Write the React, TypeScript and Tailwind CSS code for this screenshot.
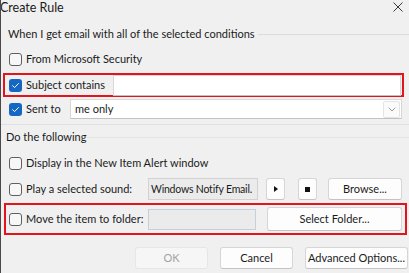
import React from 'react';

const Box = ({ checked = false }: { checked?: boolean }) =>
  checked ? (
    <span className="flex h-[13px] w-[13px] shrink-0 items-center justify-center rounded-[3px] bg-[#1467c2]">
      <svg width="9" height="9" viewBox="0 0 10 10" fill="none">
        <path d="M1.8 5.2 4 7.3 8.3 2.8" stroke="white" strokeWidth="1.1" strokeLinecap="round" strokeLinejoin="round" />
      </svg>
    </span>
  ) : (
    <span className="h-[13px] w-[13px] shrink-0 rounded-[3px] border border-[#5f5f5f] bg-[#f7f7f7]" />
  );

const Btn = ({ children, className = '', disabled = false }: { children: React.ReactNode; className?: string; disabled?: boolean }) => (
  <div
    className={`flex shrink-0 items-center justify-center whitespace-nowrap rounded-[3px] border ${
      disabled ? 'border-[#e6e6e6] bg-[#f6f6f6] text-[#a3a3a3]' : 'border-[#d6d6d6] border-b-[#c4c4c4] bg-[#fdfdfd] text-[#1b1b1b]'
    } ${className}`}
  >
    {children}
  </div>
);

export default function App() {
  return (
    <div
      className="relative flex h-[273px] w-[409px] flex-col overflow-hidden whitespace-nowrap border-l border-[#4a4a4a] bg-[#f0f0f0] text-[11px] text-[#1b1b1b]"
      style={{ fontFamily: 'Lato, "Noto Sans", sans-serif' }}
    >
      {/* Title bar */}
      <div className="flex h-[16px] items-start justify-between">
        <span className="-ml-[1px] text-[12.5px] leading-[15px]">Create Rule</span>
        <svg className="mr-[6px] mt-[2px]" width="10" height="10" viewBox="0 0 10 10">
          <path d="M0.5 0.5 9.5 9.5M9.5 0.5 0.5 9.5" stroke="#222" strokeWidth="0.9" />
        </svg>
      </div>

      {/* Conditions header */}
      <div className="mt-[10px] flex h-[16px] items-center pl-[7px]">
        <span className="leading-[16px]">When I get email with all of the selected conditions</span>
        <div className="ml-[3px] h-px flex-1 bg-[#dcdcdc]" />
      </div>

      {/* From Microsoft Security */}
      <div className="mt-[10px] flex h-[14px] items-center gap-[4px] pl-[8px]">
        <Box />
        <span className="leading-[14px]">From Microsoft Security</span>
      </div>

      {/* Subject contains */}
      <div className="ml-[2px] mr-[5px] mt-[7px] flex h-[24px] items-center border-2 border-[#e3141b]">
        <div className="flex w-[108px] shrink-0 items-center gap-[4px] pl-[4px]">
          <Box checked />
          <span className="leading-[14px]">Subject contains</span>
        </div>
        <div className="mr-[1px] h-[21px] flex-1 border border-[#d8d8d8] border-b-[#c2c2c2] bg-white" />
      </div>

      {/* Sent to */}
      <div className="mt-[2px] flex h-[20px] items-center pl-[8px] pr-[7px]">
        <div className="flex w-[61px] shrink-0 items-center gap-[4px]">
          <Box checked />
          <span className="leading-[14px]">Sent to</span>
        </div>
        <div className="flex h-[20px] flex-1 items-center justify-between border border-[#d8d8d8] border-b-[#c2c2c2] bg-white pl-[4px] pr-[1px]">
          <span className="leading-[14px]">me only</span>
          <div className="flex h-[17px] w-[17px] items-center justify-center rounded-[2px] border border-[#e4e4e4] bg-[#fbfbfb]">
            <svg width="8" height="5" viewBox="0 0 8 5">
              <path d="M0.8 0.8 4 4 7.2 0.8" stroke="#9a9a9a" strokeWidth="1" fill="none" />
            </svg>
          </div>
        </div>
      </div>

      <div className="mt-[5px] h-px bg-[#e0e0e0]" />

      {/* Actions header */}
      <div className="mt-[4px] flex h-[16px] items-center pl-[5px]">
        <span className="leading-[16px]">Do the following</span>
        <div className="ml-[1px] h-px flex-1 bg-[#e4e4e4]" />
      </div>

      {/* Display alert */}
      <div className="mt-[11px] flex h-[14px] items-center gap-[4px] pl-[8px]">
        <Box />
        <span className="leading-[14px]">Display in the New Item Alert window</span>
      </div>

      {/* Play sound */}
      <div className="mt-[8px] flex h-[22px] items-center pl-[8px]">
        <div className="flex w-[139px] shrink-0 items-center gap-[4px]">
          <Box />
          <span className="leading-[14px]">Play a selected sound:</span>
        </div>
        <div className="flex h-[22px] w-[110px] shrink-0 items-center overflow-hidden border border-[#d2d2d2] bg-[#ebebeb] pl-[2px]">
          <span className="text-[10.5px] leading-[14px] tracking-[-0.2px]">Windows Notify Email.</span>
        </div>
        <Btn className="ml-[8px] h-[22px] w-[19px]">
          <svg width="4" height="6" viewBox="0 0 4 6">
            <path d="M0 0 4 3 0 6Z" fill="#111" />
          </svg>
        </Btn>
        <Btn className="ml-[13px] h-[22px] w-[19px]">
          <span className="block h-[5px] w-[5px] bg-[#111]" />
        </Btn>
        <Btn className="ml-[11px] h-[22px] w-[74px]">Browse...</Btn>
      </div>

      {/* Move to folder */}
      <div className="ml-[3px] mr-[2px] mt-[3px] flex h-[32px] items-center border-2 border-[#e3141b]">
        <div className="flex w-[142px] shrink-0 items-center gap-[4px] pl-[3px]">
          <Box />
          <span className="leading-[14px]">Move the item to folder:</span>
        </div>
        <div className="h-[21px] w-[108px] shrink-0 border border-[#c5d0dc] bg-[#ebebeb]" />
        <Btn className="ml-[11px] h-[24px] w-[135px]">Select Folder...</Btn>
      </div>

      {/* Footer buttons */}
      <div className="mt-[12px] flex h-[22px] items-center pl-[134px]">
        <Btn disabled className="h-[22px] w-[73px]">OK</Btn>
        <Btn className="ml-[12px] h-[22px] w-[73px]">Cancel</Btn>
        <Btn className="ml-[12px] h-[22px] w-[103px]">Advanced Options...</Btn>
      </div>
    </div>
  );
}
